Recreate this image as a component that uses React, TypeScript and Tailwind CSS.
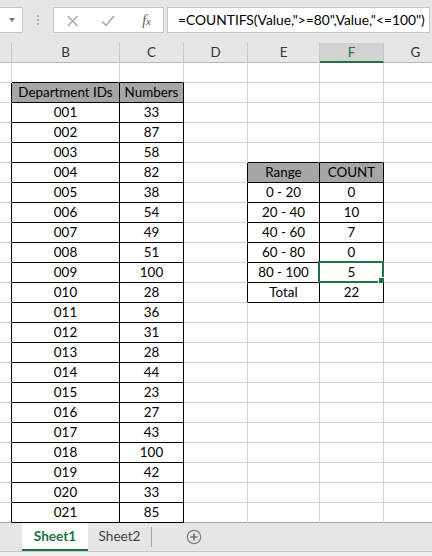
import React from "react";

const ids = ["001","002","003","004","005","006","007","008","009","010","011","012","013","014","015","016","017","018","019","020","021"];
const nums = ["33","87","58","82","38","54","49","51","100","28","36","31","28","44","23","27","43","100","42","33","85"];
const ranges: [string, string][] = [["Range","COUNT"],["0 - 20","0"],["20 - 40","10"],["40 - 60","7"],["60 - 80","0"],["80 - 100","5"],["Total","22"]];

const ROWS = 23;
const COLS = 7;

function inTable(r: number, c: number) {
  if (r >= 2 && r <= 23 && (c === 1 || c === 2)) return true;
  if (r >= 6 && r <= 12 && (c === 4 || c === 5)) return true;
  return false;
}
function isHeader(r: number, c: number) {
  return (r === 2 && (c === 1 || c === 2)) || (r === 6 && (c === 4 || c === 5));
}
function text(r: number, c: number): string {
  if (c === 1 && r === 2) return "Department IDs";
  if (c === 2 && r === 2) return "Numbers";
  if (c === 1 && r >= 3 && r <= 23) return ids[r - 3];
  if (c === 2 && r >= 3 && r <= 23) return nums[r - 3];
  if ((c === 4 || c === 5) && r >= 6 && r <= 12) return ranges[r - 6][c - 4];
  return "";
}

function Cell({ r, c }: { r: number; c: number }) {
  const rightBlack = inTable(r, c) || inTable(r, c + 1);
  const bottomBlack = inTable(r, c) || inTable(r + 1, c);
  const last = r === ROWS;
  const header = isHeader(r, c);
  const selected = r === 11 && c === 5;
  return (
    <div
      className={
        "relative box-border flex items-center justify-center h-5 border-r border-b text-[13.4px] text-black leading-none " +
        (rightBlack ? "border-r-black " : "border-r-[#d4d4d4] ") +
        (bottomBlack ? "border-b-black " : last ? "border-b-[#a6a6a6] " : "border-b-[#d4d4d4] ") +
        (header ? "bg-[#a6a6a6] " : "bg-white ")
      }
    >
      <span className="whitespace-nowrap pt-[1px]">{text(r, c)}</span>
      {selected && (
        <>
          <div className="absolute -left-[2px] -top-[2px] -right-[1px] -bottom-[1px] border-2 border-[#217346] pointer-events-none" />
          <div className="absolute -right-[3px] -bottom-[3px] w-[6px] h-[6px] bg-[#217346] border border-white box-content" />
        </>
      )}
    </div>
  );
}

export default function App() {
  const letters = ["", "B", "C", "D", "E", "F", "G"];
  const rows = Array.from({ length: ROWS }, (_, i) => i + 1);
  const cols = Array.from({ length: COLS }, (_, i) => i);
  return (
    <div className="w-[432px] h-[556px] overflow-hidden bg-white flex flex-col" style={{ fontFamily: "Lato, 'Liberation Sans', sans-serif" }}>
      {/* formula bar */}
      <div className="h-[43px] bg-[#e6e6e6] flex items-start pt-[7px] shrink-0">
        <div className="w-[23px] h-[26px] bg-white border border-[#c6c6c6] border-l-0 flex items-center justify-end pr-[7px]">
          <div className="w-0 h-0 border-l-[3.5px] border-r-[3.5px] border-t-[4px] border-l-transparent border-r-transparent border-t-[#777]" />
        </div>
        <div className="w-[30px] h-[26px] flex flex-col items-center justify-center gap-[2px]">
          <div className="w-[2px] h-[2px] bg-[#b0b0b0]" />
          <div className="w-[2px] h-[2px] bg-[#b0b0b0]" />
          <div className="w-[2px] h-[2px] bg-[#b0b0b0]" />
        </div>
        <div className="w-[111px] h-[26px] bg-white border border-[#c6c6c6] flex items-center">
          <svg width="111" height="24" viewBox="0 0 111 24">
            <path d="M14 8 L24 18 M24 8 L14 18" stroke="#a8a8a8" strokeWidth="1.4" fill="none" />
            <path d="M49 13.5 L53 17.5 L61 8" stroke="#a8a8a8" strokeWidth="1.6" fill="none" />
          </svg>
        </div>
        <div className="-ml-[111px] w-[111px] h-[26px] flex items-center justify-end pr-[13px]">
          <span className="italic text-[#555] text-[14px]" style={{ fontFamily: "'Liberation Serif', serif" }}>f<span className="text-[11px]">x</span></span>
        </div>
        <div className="ml-[3px] flex-1 mr-[2px] h-[26px] bg-white border border-[#c6c6c6] flex items-center pl-[10px] overflow-hidden">
          <span className="whitespace-nowrap text-[13.8px] text-black">=COUNTIFS(Value,"&gt;=80",Value,"&lt;=100")</span>
        </div>
      </div>
      {/* column headers */}
      <div className="grid grid-cols-[12px_108px_64px_64px_72px_64px_64px] shrink-0">
        {letters.map((l, i) => (
          <div
            key={i}
            className={
              "h-5 box-border border-r border-r-[#c6c6c6] flex items-center justify-center text-[13.4px] " +
              (i === 5 ? "bg-[#d2d2d2] border-b-2 border-b-[#217346] text-[#217346]" : "bg-[#e6e6e6] border-b border-b-[#b8b8b8] text-[#333]")
            }
          >
            <span className={i === 5 ? "pt-[1px]" : ""}>{l}</span>
          </div>
        ))}
      </div>
      {/* grid */}
      <div className="grid grid-cols-[12px_108px_64px_64px_72px_64px_64px] shrink-0">
        {rows.map((r) => cols.map((c) => <Cell key={r + "-" + c} r={r} c={c} />))}
      </div>
      {/* tabs */}
      <div className="h-[28px] bg-[#e6e6e6] flex items-stretch shrink-0">
        <div className="w-[22px]" />
        <div className="w-[66px] bg-white border-b-2 border-b-[#217346] flex items-center justify-center">
          <span className="font-bold text-[#217346] text-[13.6px]">Sheet1</span>
        </div>
        <div className="w-[63px] flex items-center justify-center pb-[2px]">
          <span className="text-[#444] text-[13.6px]">Sheet2</span>
        </div>
        <div className="w-px bg-[#a6a6a6] my-[4px]" />
        <div className="ml-[34px] flex items-center pb-[1px]">
          <svg width="16" height="16" viewBox="0 0 16 16">
            <circle cx="8" cy="8" r="6.7" stroke="#808080" strokeWidth="1.2" fill="none" />
            <path d="M8 4.5 V11.5 M4.5 8 H11.5" stroke="#707070" strokeWidth="1.6" />
          </svg>
        </div>
      </div>
      <div className="h-px bg-[#c6c6c6] shrink-0" />
      <div className="flex-1 bg-[#f0f0f0]" />
    </div>
  );
}
